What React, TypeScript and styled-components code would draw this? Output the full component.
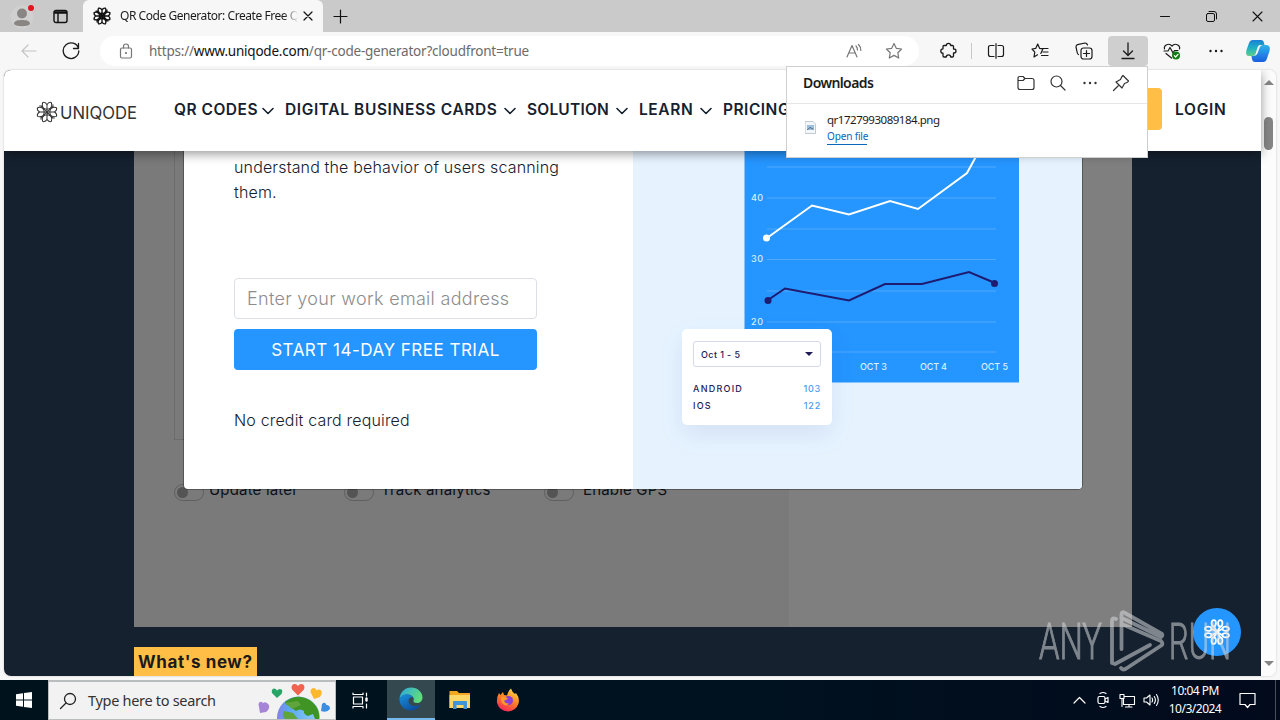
import * as React from 'react';
import styled, { createGlobalStyle } from 'styled-components';

const GlobalStyle = createGlobalStyle`
  * {
    box-sizing: border-box;
  }
  body {
    margin: 0;
    overflow: hidden;
  }
`;

const ui = `'Noto Sans', 'Open Sans', sans-serif`;
const site = `'Inter', 'Liberation Sans', sans-serif`;

const Desktop = styled.div`
  position: relative;
  display: flex;
  flex-direction: column;
  width: 1280px;
  height: 720px;
  overflow: hidden;
  font-family: ${ui};
`;

const Browser = styled.div`
  display: flex;
  flex-direction: column;
  height: 680px;
  background: #f7f7f7;
`;

const Icon = styled.svg<{ $w: number; $h?: number; $stroke?: number }>`
  display: block;
  flex: none;
  width: ${(p) => p.$w}px;
  height: ${(p) => p.$h || p.$w}px;
  fill: none;
  stroke: currentColor;
  stroke-width: ${(p) => p.$stroke ?? 1.2};
  stroke-linecap: round;
  stroke-linejoin: round;
`;

/* ---------- tab strip ---------- */

const TabStrip = styled.div`
  display: flex;
  height: 32px;
  background: #cacaca;
  color: #111;
`;

const StripSlot = styled.div<{ $w: number }>`
  display: flex;
  align-items: center;
  justify-content: center;
  width: ${(p) => p.$w}px;
  height: 32px;
`;

const Tab = styled.div`
  display: flex;
  align-items: center;
  width: 240px;
  height: 32px;
  padding: 0 9px 0 10px;
  border-radius: 6px 6px 0 0;
  background: #f7f7f7;
`;

const TabTitle = styled.div`
  flex: 1;
  margin: -1px 4px 0 9px;
  overflow: hidden;
  white-space: nowrap;
  font-size: 12px;
  letter-spacing: -0.45px;
  color: #1b1b1b;
  -webkit-mask-image: linear-gradient(90deg, #000 92%, transparent 100%);
  mask-image: linear-gradient(90deg, #000 92%, transparent 100%);
`;

const WindowControls = styled.div`
  display: flex;
  margin-left: auto;
`;

/* ---------- toolbar ---------- */

const Toolbar = styled.div`
  display: flex;
  align-items: center;
  height: 38px;
  padding-left: 8px;
  color: #1b1b1b;
`;

const ToolSlot = styled.div<{ $w?: number; $muted?: boolean }>`
  display: flex;
  flex: none;
  align-items: center;
  justify-content: center;
  width: ${(p) => p.$w || 44}px;
  height: 38px;
  color: ${(p) => (p.$muted ? '#c4c4c4' : 'inherit')};
`;

const ActiveTool = styled.div`
  display: flex;
  align-items: center;
  justify-content: center;
  width: 40px;
  height: 30px;
  border-radius: 4px;
  background: #cfcfcf;
`;

const AddressBar = styled.div`
  display: flex;
  align-items: center;
  width: 819px;
  height: 30px;
  margin: 0 7px;
  padding: 0 16px 0 19px;
  border-radius: 15px;
  background: #fff;
  color: #777;
`;

const Url = styled.div`
  flex: 1;
  margin-left: 16px;
  font-size: 13.5px;
  letter-spacing: -0.22px;
  color: #6b6b6b;

  span {
    color: #111;
  }
`;

const Separator = styled.div`
  width: 1px;
  height: 16px;
  margin: 0 2px 0 1px;
  background: #c8c8c8;
`;

/* ---------- page ---------- */

const Viewport = styled.div`
  position: relative;
  display: flex;
  width: 1272px;
  height: 606px;
  margin-left: 4px;
  border-radius: 7px;
  overflow: hidden;
  background: #fff;
  box-shadow: 0 0 2px #bbb;
`;

const Page = styled.div`
  position: relative;
  width: 1257px;
  height: 606px;
  background: #15212f;
  font-family: ${site};
`;

const SiteHeader = styled.header`
  position: relative;
  z-index: 3;
  display: flex;
  align-items: center;
  height: 81px;
  padding-left: 32px;
  background: #fff;
  box-shadow: 0 3px 10px rgba(0, 0, 0, 0.4);
  color: #15212f;
`;

const LogoMark = styled.div`
  display: flex;
  align-items: center;
  width: 138px;
  padding-top: 2px;
  color: #333;
`;

const NavItem = styled.div<{ $w: number; $track: number }>`
  display: flex;
  align-items: center;
  flex: none;
  width: ${(p) => p.$w}px;
  height: 24px;
  margin-top: -3px;
  font-size: 15.5px;
  font-weight: 600;
  letter-spacing: ${(p) => p.$track}px;
  white-space: nowrap;

  svg {
    margin: 4px 11px 0 auto;
  }
`;

const DemoButton = styled.div`
  width: 150px;
  height: 42px;
  margin: -3px 13px 0 139px;
  border-radius: 4px;
  background: #ffbf47;
`;

const Scrollbar = styled.div`
  display: flex;
  flex-direction: column;
  align-items: center;
  width: 15px;
  padding: 10px 0 10px;
  background: #fcfcfc;
`;

const Arrow = styled.div<{ $down?: boolean }>`
  border: 5px solid transparent;
  border-top-width: ${(p) => (p.$down ? 5 : 0)}px;
  border-bottom-width: ${(p) => (p.$down ? 0 : 5)}px;
  border-top-color: ${(p) => (p.$down ? '#858585' : 'transparent')};
  border-bottom-color: ${(p) => (p.$down ? 'transparent' : '#858585')};
`;

const Thumb = styled.div`
  width: 9px;
  height: 33px;
  margin: 32px 0 auto;
  border-radius: 5px;
  background: #858585;
`;

const Generator = styled.section`
  display: flex;
  width: 998px;
  height: 476px;
  margin-left: 130px;
  background: #7f7f7f;
`;

const GeneratorForm = styled.div`
  width: 655px;
  padding-left: 40px;
  background: #7a7a7a;
`;

const FormBox = styled.div`
  width: 575px;
  height: 289px;
  border: 1px solid #6c6c6c;
  border-top: 0;
`;

const Toggles = styled.div`
  display: flex;
  margin-top: 44px;
`;

const Toggle = styled.div<{ $w: number }>`
  display: flex;
  align-items: center;
  width: ${(p) => p.$w}px;
  height: 17px;
`;

const Switch = styled.div`
  width: 30px;
  height: 17px;
  padding: 2px;
  border: 1px solid #5f5f5f;
  border-radius: 9px;

  &::before {
    content: '';
    display: block;
    width: 11px;
    height: 11px;
    border-radius: 50%;
    background: #545454;
  }
`;

const ToggleLabel = styled.div<{ $gap: number }>`
  margin: -6px 0 0 ${(p) => p.$gap}px;
  font-size: 15px;
  letter-spacing: 0.18px;
  color: #0b1118;
  white-space: nowrap;
`;

const WhatsNew = styled.div`
  width: 123px;
  height: 29px;
  margin: 20px 0 0 130px;
  padding-left: 4px;
  background: #ffbf47;
  font-size: 17px;
  font-weight: 700;
  line-height: 30px;
  letter-spacing: 0.6px;
  color: #1b1b1b;
  white-space: nowrap;
`;

/* ---------- trial modal ---------- */

const Modal = styled.div`
  position: absolute;
  z-index: 2;
  top: 81px;
  left: 180px;
  display: flex;
  width: 898px;
  height: 338px;
  border-radius: 0 0 4px 4px;
  overflow: hidden;
  background: #fff;
  box-shadow: 0 0 0 1px rgba(0, 0, 0, 0.3);
`;

const TrialPane = styled.div`
  width: 449px;
  padding: 4px 0 0 50px;
  color: #15212f;
`;

const TrialText = styled.p`
  width: 350px;
  height: 50px;
  margin: 0 0 73px;
  font-size: 16px;
  font-weight: 300;
  line-height: 25px;
  letter-spacing: 0.15px;
`;

const EmailField = styled.div`
  width: 303px;
  height: 41px;
  padding-left: 12px;
  border: 1px solid #dcdfe3;
  border-radius: 4px;
  font-size: 18px;
  font-weight: 300;
  line-height: 40px;
  letter-spacing: 0.31px;
  color: #8d8d8d;
`;

const TrialButton = styled.div`
  width: 303px;
  height: 41px;
  margin-top: 10px;
  border-radius: 4px;
  background: #2595ff;
  font-size: 17px;
  line-height: 43px;
  letter-spacing: 0.5px;
  text-align: center;
  color: #fff;
`;

const Note = styled.div`
  margin-top: 38px;
  font-size: 16px;
  font-weight: 300;
  line-height: 24px;
  letter-spacing: 0.17px;
`;

const ChartPane = styled.div`
  position: relative;
  width: 449px;
  background: #e6f3ff;
`;

const ChartSvg = styled.svg`
  display: block;
  font-family: ${site};
`;

const StatsCard = styled.div`
  position: absolute;
  top: 178px;
  left: 49px;
  width: 150px;
  height: 96px;
  padding: 12px 11px 0;
  border-radius: 5px;
  background: #fff;
  box-shadow: 0 10px 24px rgba(60, 80, 160, 0.1);
  color: #1e1b58;
`;

const RangeSelect = styled.div`
  display: flex;
  align-items: center;
  justify-content: space-between;
  width: 128px;
  height: 26px;
  margin-bottom: 13px;
  padding: 0 7px;
  border: 1px solid #d5d8ea;
  border-radius: 3px;
  font-size: 9px;
  font-weight: 500;
  letter-spacing: 0.4px;
`;

const Caret = styled.div`
  border: 4px solid transparent;
  border-top-color: #1e1b58;
  border-bottom: 0;
`;

const StatRow = styled.div`
  display: flex;
  justify-content: space-between;
  width: 128px;
  height: 17px;
  font-size: 9px;
  font-weight: 500;
  line-height: 17px;
  letter-spacing: 1.25px;

  span:last-child {
    color: #4a9af0;
    letter-spacing: 0.8px;
  }
`;

const ChatBubble = styled.div`
  position: absolute;
  z-index: 2;
  top: 538px;
  left: 1189px;
  display: flex;
  align-items: center;
  justify-content: center;
  width: 48px;
  height: 48px;
  border-radius: 50%;
  background: #2595ff;
  color: #fff;
`;

/* ---------- downloads flyout ---------- */

const Flyout = styled.div`
  position: absolute;
  z-index: 5;
  top: 66px;
  left: 786px;
  width: 362px;
  height: 92px;
  border: 1px solid #cfcfcf;
  background: #fff;
  color: #1b1b1b;
`;

const FlyoutHead = styled.div`
  display: flex;
  align-items: center;
  height: 37px;
  padding: 0 17px 4px 16px;
  border-bottom: 1px solid #e6e6e6;
  color: #333;

  svg + svg {
    margin-left: 14.5px;
  }
`;

const FlyoutTitle = styled.div`
  margin: -1px auto 0 0;
  font-size: 14px;
  font-weight: 600;
  letter-spacing: -0.6px;
  color: #1b1b1b;
`;

const Download = styled.div`
  display: flex;
  padding: 7px 0 0 18px;

  > svg {
    margin-top: 10px;
  }
`;

const FileInfo = styled.div`
  margin-left: 11px;
  font-size: 11.5px;
  line-height: 17px;
  letter-spacing: -0.48px;
`;

const OpenFile = styled.div`
  width: 40px;
  margin-top: 1px;
  border-bottom: 1px solid #0a66b8;
  font-size: 10px;
  line-height: 15px;
  letter-spacing: -0.15px;
  color: #0a66b8;
  white-space: nowrap;
`;

const Watermark = styled.svg`
  position: absolute;
  z-index: 6;
  top: 606px;
  left: 1034px;
  opacity: 0.55;
  font-family: 'Roboto', sans-serif;
`;

/* ---------- taskbar ---------- */

const Taskbar = styled.div`
  display: flex;
  height: 40px;
  background: linear-gradient(90deg, #00131c 0%, #001220 55%, #020a1c 100%);
  color: #fff;
`;

const TaskSlot = styled.div<{ $w: number; $active?: boolean }>`
  display: flex;
  flex: none;
  align-items: center;
  justify-content: center;
  width: ${(p) => p.$w}px;
  height: 40px;
  border-bottom: ${(p) => (p.$active ? '2px solid #76b9ed' : '0')};
  background: ${(p) => (p.$active ? '#33484f' : 'transparent')};
`;

const SearchBox = styled.div`
  display: flex;
  align-items: center;
  width: 288px;
  height: 40px;
  padding: 0 5px 0 10px;
  border: 1px solid #b9bdbd;
  border-width: 2px 1px 1px;
  background: #f2f2f2;
  color: #222;
`;

const SearchText = styled.div`
  margin: -2px auto 0 11px;
  font-size: 14.5px;
  letter-spacing: -0.3px;
  color: #333;
`;

const Tray = styled.div`
  display: flex;
  align-items: center;
  margin-left: auto;
`;

const Clock = styled.div`
  width: 60px;
  font-size: 12px;
  line-height: 18px;
  letter-spacing: -0.5px;
  text-align: center;
  white-space: nowrap;
`;

const ShowDesktop = styled.div`
  width: 5px;
  height: 40px;
  border-left: 1px solid #49505c;
`;

const quarters = [0, 90, 180, 270];

const Knot = ({ size, stroke, round }: { size: number; stroke: number; round?: boolean }) => (
  <Icon $w={size} $stroke={stroke} viewBox='0 0 24 24'>
    {quarters.map((angle) => (
      <g key={angle} transform={`rotate(${angle} 12 12)`}>
        {round ? (
          <>
            <ellipse cx='9' cy='4' rx='2' ry='3' />
            <ellipse cx='15' cy='4' rx='2' ry='3' />
            <path d='M12 12L9 7M12 12L15 7' />
          </>
        ) : (
          <path d='M12 12V4M12 9Q7.500 8.500 7 5.500L4 5.500M7 5.500Q6.500 3 7.500 1.500Q10.500 1 12 4Q13.500 1 16.500 1.500Q17.500 3 17 5.500Q16.500 8.500 12 9M12 12L6 6' />
        )}
      </g>
    ))}
  </Icon>
);

const Chevron = () => (
  <Icon $w={12} $h={8} $stroke={1.6} viewBox='0 0 12 8'>
    <path d='M1 1.500L6 6.500L11 1.500' />
  </Icon>
);

const Star = ({ lines }: { lines?: boolean }) =>
  lines ? (
    <Icon $w={18} viewBox='0 0 18 18'>
      <path d='M9.800 11.500L12 6.800L8.700 6.400L6.700 2L4.700 6.400L1 7L3.800 10.200L3 15L6.500 12.800M11.500 6.500H17M12 10H17M10.500 13.500H17' />
    </Icon>
  ) : (
    <Icon $w={18} viewBox='0 0 18 18'>
      <path d='M9 1.500L11.300 6.300L16.600 7L12.800 10.700L13.700 16L9 13.400L4.300 16L5.200 10.700L1.400 7L6.700 6.300Z' />
    </Icon>
  );

const Dots = () => (
  <Icon $w={16} $stroke={0} viewBox='0 0 16 16'>
    <g fill='currentColor'>
      <circle cx='2.500' cy='8' r='1.200' />
      <circle cx='8' cy='8' r='1.200' />
      <circle cx='13.500' cy='8' r='1.200' />
    </g>
  </Icon>
);

const TopStrip = () => (
  <TabStrip>
    <StripSlot $w={44}>
      <Icon $w={24} $h={28} $stroke={0} viewBox='0 0 24 28'>
        <circle cx='12' cy='15' r='11.500' fill='#d0d0d0' />
        <circle cx='12' cy='11.500' r='5' fill='#898583' />
        <path d='M4 22C4 18.500 8 18 12 18S20 18.500 20 22C18 25 6 25 4 22Z' fill='#898583' />
        <circle cx='21' cy='6' r='3' fill='#e81123' />
      </Icon>
    </StripSlot>
    <StripSlot $w={32}>
      <Icon $w={15} $stroke={1.4} viewBox='0 0 15 15'>
        <rect x='1' y='1.500' width='13' height='12' rx='2' />
        <path d='M1.500 4H13.500M5 4V13M1.500 3H13.500' />
      </Icon>
    </StripSlot>
    <StripSlot $w={7} />
    <Tab>
      <Knot size={18} stroke={1.8} />
      <TabTitle>QR Code Generator: Create Free QR</TabTitle>
      <Icon $w={12} viewBox='0 0 12 12'>
        <path d='M2 2L10 10M10 2L2 10' />
      </Icon>
    </Tab>
    <StripSlot $w={34}>
      <Icon $w={15} viewBox='0 0 15 15'>
        <path d='M7.500 1V14M1 7.500H14' />
      </Icon>
    </StripSlot>
    <WindowControls>
      <StripSlot $w={46}>
        <Icon $w={10} $stroke={1} viewBox='0 0 10 10'>
          <path d='M0.500 5.500H9.500' />
        </Icon>
      </StripSlot>
      <StripSlot $w={46}>
        <Icon $w={11} $stroke={1} viewBox='0 0 11 11'>
          <rect x='0.500' y='2.500' width='8' height='8' rx='1.500' />
          <path d='M3 0.500H8Q10.500 0.500 10.500 3V8' />
        </Icon>
      </StripSlot>
      <StripSlot $w={46}>
        <Icon $w={11} $stroke={1.1} viewBox='0 0 11 11'>
          <path d='M1 1L10 10M10 1L1 10' />
        </Icon>
      </StripSlot>
    </WindowControls>
  </TabStrip>
);

const BrowserToolbar = () => (
  <Toolbar>
    <ToolSlot $w={41} $muted>
      <Icon $w={16} viewBox='0 0 16 16'>
        <path d='M15 8H1M7 2L1 8L7 14' />
      </Icon>
    </ToolSlot>
    <ToolSlot>
      <Icon $w={18} $stroke={1.3} viewBox='0 0 18 18'>
        <path d='M16.500 6.500A7.800 7.800 0 1 0 16.800 9M16.500 1.500V6.500H11.500' />
      </Icon>
    </ToolSlot>
    <AddressBar>
      <Icon $w={14} $h={16} viewBox='0 0 14 16'>
        <rect x='1.500' y='5' width='11' height='10' rx='1.500' />
        <path d='M4.500 5V3.500A2.500 2.500 0 0 1 9.500 3.500V5' />
        <circle cx='7' cy='10' r='0.500' />
      </Icon>
      <Url>
        https://<span>www.uniqode.com</span>/qr-code-generator?cloudfront=true
      </Url>
      <Icon $w={18} viewBox='0 0 18 18' style={{ marginRight: 22 }}>
        <path d='M2 15L7 3.500L12 15M3.800 11H10.300M11 4Q12.500 5.500 12.500 8M13.500 2.500Q16 5 15.800 8.500' />
      </Icon>
      <Star />
    </AddressBar>
    <ToolSlot>
      <Icon $w={18} $stroke={1.3} viewBox='0 0 18 18'>
        <path d='M5 3.500H7.300A2.200 2.200 0 0 1 11.700 3.500H13.500Q14.500 3.500 14.500 4.500V7H15A2 2 0 0 1 15 11H14.500V14Q14.500 15 13.500 15H11.700A2.200 2.200 0 0 0 7.300 15H5Q4 15 4 14V11.200A2.200 2.200 0 0 1 4 6.800V4.500Q4 3.500 5 3.500Z' />
      </Icon>
    </ToolSlot>
    <Separator />
    <ToolSlot>
      <Icon $w={18} $h={16} viewBox='0 0 18 16'>
        <path d='M7 2.500H3.500Q1.500 2.500 1.500 4.500V11.500Q1.500 13.500 3.500 13.500H7M11 2.500H14.500Q16.500 2.500 16.500 4.500V11.500Q16.500 13.500 14.500 13.500H11M9 0.700V15.300' />
      </Icon>
    </ToolSlot>
    <ToolSlot>
      <Star lines />
    </ToolSlot>
    <ToolSlot>
      <Icon $w={18} viewBox='0 0 18 18'>
        <rect x='6' y='6' width='11' height='11' rx='2.500' />
        <path d='M11.500 8.500V14.500M8.500 11.500H14.500M3.500 12.500Q2.500 12 2.300 11L1 5Q1 3 2.600 2.600L10 1Q12 1 12.500 3' />
      </Icon>
    </ToolSlot>
    <ToolSlot>
      <ActiveTool>
        <Icon $w={16} $h={18} $stroke={1.3} viewBox='0 0 16 18'>
          <path d='M8 1V13M3.500 9L8 13.500L12.500 9M2 16.500H14' />
        </Icon>
      </ActiveTool>
    </ToolSlot>
    <ToolSlot>
      <Icon $w={18} viewBox='0 0 18 18'>
        <path d='M1.500 7C0.500 3 6 0.500 9 4C12 0.500 17.500 3 16.500 7M1 9H5L7 5.500L10 11L11.500 8.500H15M3 11.500L8.500 16' />
        <circle cx='13' cy='13.500' r='4' fill='#137c13' stroke='none' />
        <path d='M11.300 13.700L12.600 15L15 12.300' stroke='#fff' />
      </Icon>
    </ToolSlot>
    <ToolSlot>
      <Dots />
    </ToolSlot>
    <ToolSlot $w={40}>
      <Icon $w={26} $stroke={0} viewBox='0 0 26 26'>
        <defs>
          <linearGradient id='copilotA' x1='0' y1='0' x2='0' y2='1'>
            <stop offset='0' stopColor='#1b7fd6' />
            <stop offset='0.500' stopColor='#1fb0c4' />
            <stop offset='1' stopColor='#5fd08a' />
          </linearGradient>
          <linearGradient id='copilotB' x1='0' y1='0' x2='0' y2='1'>
            <stop offset='0' stopColor='#2fb4ea' />
            <stop offset='1' stopColor='#1a5fe0' />
          </linearGradient>
        </defs>
        <path d='M8 2H16Q18.500 2 19 5L19.500 7H15Q13 7 12 11L10.500 16Q10 18 7.500 18H4Q0 18 1.500 12L4 5Q5 2 8 2Z' fill='url(#copilotA)' />
        <path d='M18 24H10Q7.500 24 7 21L6.500 18H8Q12 18 13 14L14.500 10Q15.500 7 18 7H21.500Q26 7.500 24.500 13L22 20.500Q21 24 18 24Z' fill='url(#copilotB)' />
      </Icon>
    </ToolSlot>
  </Toolbar>
);

const gridLines = [167, 198, 229, 259.5, 291, 322, 352];

// coordinates inside are window based, the viewBox shifts them to the pane
const Chart = () => (
  <ChartSvg width='449' height='338' viewBox='633 151 449 338'>
    <rect x='744.500' y='151' width='274.500' height='231.500' fill='#2595ff' />
    {gridLines.map((y) => (
      <path key={y} d={`M767 ${y}H996`} stroke='#50a9ff' strokeWidth='1' />
    ))}
    <g fill='#d8f0ff' fontSize='9' fontWeight='500'>
      <text x='751' y='201' textLength='12'>40</text>
      <text x='751' y='262' textLength='12'>30</text>
      <text x='751' y='325' textLength='12'>20</text>
      <text x='860' y='370' textLength='27'>OCT 3</text>
      <text x='920' y='370' textLength='27'>OCT 4</text>
      <text x='981' y='370' textLength='27'>OCT 5</text>
    </g>
    <g fill='none' strokeWidth='2'>
      <path d='M767 238L812 205.500L849 214.500L890 201L918 209L967 173L979 151' stroke='#fff' />
      <path d='M768 300L785 288.500L849 300.500L885 284H922L969 272L995 283' stroke='#1e1b70' />
    </g>
    <circle cx='766.500' cy='238' r='3.500' fill='#fff' />
    <circle cx='768' cy='300.500' r='3.500' fill='#1e1b70' />
    <circle cx='994.500' cy='283.500' r='3.500' fill='#1e1b70' />
  </ChartSvg>
);

const TrialModal = () => (
  <Modal>
    <TrialPane>
      <TrialText>
        understand the behavior of users scanning
        <br />
        them.
      </TrialText>
      <EmailField>Enter your work email address</EmailField>
      <TrialButton>START 14-DAY FREE TRIAL</TrialButton>
      <Note>No credit card required</Note>
    </TrialPane>
    <ChartPane>
      <Chart />
      <StatsCard>
        <RangeSelect>
          Oct 1 - 5
          <Caret />
        </RangeSelect>
        <StatRow>
          <span>ANDROID</span>
          <span>103</span>
        </StatRow>
        <StatRow>
          <span>IOS</span>
          <span>122</span>
        </StatRow>
      </StatsCard>
    </ChartPane>
  </Modal>
);

const Header = () => (
  <SiteHeader>
    <LogoMark>
      <Knot size={22} stroke={1.1} />
      <Icon $w={82} $h={24} $stroke={0} viewBox='0 0 82 24'>
        <text x='2' y='18.500' textLength='77' lengthAdjust='spacingAndGlyphs' fontSize='17.500' fill='#333'>
          UNIQODE
        </text>
      </Icon>
    </LogoMark>
    <NavItem $w={111} $track={0.5}>
      QR CODES
      <Chevron />
    </NavItem>
    <NavItem $w={242} $track={0.61}>
      DIGITAL BUSINESS CARDS
      <Chevron />
    </NavItem>
    <NavItem $w={112} $track={0.2}>
      SOLUTION
      <Chevron />
    </NavItem>
    <NavItem $w={84} $track={0.6}>
      LEARN
      <Chevron />
    </NavItem>
    <NavItem $w={150} $track={0.5}>
      PRICING
    </NavItem>
    <DemoButton />
    <NavItem $w={60} $track={0.7}>
      LOGIN
    </NavItem>
  </SiteHeader>
);

const Downloads = () => (
  <Flyout>
    <FlyoutHead>
      <FlyoutTitle>Downloads</FlyoutTitle>
      <Icon $w={18} $h={16} viewBox='0 0 18 16'>
        <path d='M1 3.500Q1 1.500 3 1.500H6L8 3.500H15Q17 3.500 17 5.500V12.500Q17 14.500 15 14.500H3Q1 14.500 1 12.500ZM1 5.500H6L8 3.500' />
      </Icon>
      <Icon $w={18} viewBox='0 0 18 18'>
        <circle cx='7.500' cy='7.500' r='5.500' />
        <path d='M11.500 11.500L16 16' />
      </Icon>
      <Dots />
      <Icon $w={18} viewBox='0 0 18 18'>
        <path d='M11 1.500L16.500 7L15 8.500L12.500 9.500L10 14L4 8L8.500 5.500L9.700 3ZM7 11L1.500 16.500' />
      </Icon>
    </FlyoutHead>
    <Download>
      <Icon $w={11} $h={13} $stroke={0.7} viewBox='0 0 11 13'>
        <path d='M0.500 0.500H8L10.500 3V12.500H0.500Z' fill='#f4f7fa' stroke='#aab4be' />
        <rect x='2' y='4' width='7' height='5' fill='#9fc0dc' stroke='none' />
        <path d='M2.500 8.500L5 6.500L8 8' stroke='#2f4a66' />
      </Icon>
      <FileInfo>
        qr1727993089184.png
        <OpenFile>Open file</OpenFile>
      </FileInfo>
    </Download>
  </Flyout>
);

const AnyRun = () => (
  <Watermark width='200' height='70' viewBox='1034 606 200 70'>
    <g fill='#d5d8da' stroke='#d5d8da' strokeWidth='1' fontSize='50' fontWeight='300'>
      <text x='1039' y='659' textLength='63' lengthAdjust='spacingAndGlyphs'>ANY</text>
      <text x='1169' y='659' textLength='62' lengthAdjust='spacingAndGlyphs'>RUN</text>
    </g>
    <g fill='none' stroke='#d5d8da' strokeWidth='3.800' strokeLinecap='round' strokeLinejoin='round'>
      <path d='M1121.500 649V614Q1122 611 1125 613L1162 634Q1163 636 1161 637L1124 619' />
      <path d='M1116 619Q1112 617 1112 621V663L1115 664L1150 645' />
      <path d='M1121 668Q1123 671 1127 668L1162 645Q1163 643 1161 641L1124 625' />
    </g>
  </Watermark>
);

const SystemTaskbar = () => (
  <Taskbar>
    <TaskSlot $w={48}>
      <Icon $w={16} $stroke={0} viewBox='0 0 16 16'>
        <path d='M0 2.300L7 1.300V7.500H0ZM8 1.100L16 0V7.500H8ZM0 8.500H7V14.700L0 13.700ZM8 8.500H16V16L8 14.900Z' fill='#fff' />
      </Icon>
    </TaskSlot>
    <SearchBox>
      <Icon $w={18} $stroke={1.3} viewBox='0 0 18 18'>
        <circle cx='11' cy='7' r='5.500' />
        <path d='M7 11L1.500 16.500' />
      </Icon>
      <SearchText>Type here to search</SearchText>
      <Icon $w={72} $h={37} $stroke={0} viewBox='256 682 72 37'>
        <defs>
          <linearGradient id='sea' x1='0' y1='0' x2='1' y2='0'>
            <stop offset='0' stopColor='#8a7fe8' />
            <stop offset='0.250' stopColor='#5aa5ee' />
            <stop offset='1' stopColor='#8fd0f8' />
          </linearGradient>
        </defs>
        <circle cx='296.500' cy='718' r='21.500' fill='url(#sea)' />
        <path d='M283 702Q291 696 299 697Q308 698 314 706Q318 712 317 719H313L311 714L306 716Q301 714 302 711Q298 708 294 711Q289 708 288 705Q284 706 283 702Z' fill='#3f9424' />
        <path d='M283 703L296 701L299 705L290 709ZM282 711L291 713L296 719H283Q279 714 282 711Z' fill='#5fa53c' />
        <path d='M296 695.500L290 689.500Q288.500 685 292 684Q294.500 683.500 296 686Q297.500 683.500 300 684Q303.500 685 302 689.500Z' fill='#f0634f' />
        <path d='M275 698L270 693Q269 689 272 688.500Q274 688.500 275 690.500Q277 688 279.500 689.500Q281 691 279.500 694Z' fill='#27a567' />
        <path d='M312 699L308.500 692Q308.500 688 312 688Q314 688 314.500 690.500Q317 688.500 319.500 691Q320.500 694 318 697Z' fill='#fbb82c' />
        <path d='M258 713L256.500 704Q258 700 261 703Q264 701 267 705Q268 709 264 712Z' fill='#a583d6' />
        <path d='M319 711L320 704Q323 701 324.500 705Q328 705 328 709Q325 713 319 711Z' fill='#3b8de0' />
      </Icon>
    </SearchBox>
    <TaskSlot $w={49}>
      <Icon $w={17} $stroke={1.2} viewBox='0 0 17 17'>
        <path d='M1 1V2.500H11V1M1 16V14.500H11V16M14.500 1V4M14.500 12V16' />
        <rect x='1.500' y='5' width='9' height='7' />
        <path d='M14.500 6.500V8.500' strokeWidth='2.400' />
      </Icon>
    </TaskSlot>
    <StripSlot $w={2} />
    <TaskSlot $w={48} $active>
      <Icon $w={24} $stroke={0} viewBox='0 0 24 24'>
        <defs>
          <linearGradient id='edgeTop' x1='0' y1='0' x2='1' y2='0.400'>
            <stop offset='0' stopColor='#2aa6e6' />
            <stop offset='1' stopColor='#5fdc7c' />
          </linearGradient>
          <linearGradient id='edgeBody' x1='0' y1='0' x2='0.700' y2='1'>
            <stop offset='0' stopColor='#1b93dd' />
            <stop offset='1' stopColor='#0c4a9c' />
          </linearGradient>
        </defs>
        <path d='M0.500 12C1 5 6 0.500 12 0.500C19 0.500 23.500 5.500 23.500 10.500C23.500 14 21 16 18 16C15 16 14 15 14.500 13.800C16 11.500 13 7.500 8.500 7.500C4.500 7.500 1.500 9.500 0.500 12Z' fill='url(#edgeTop)' />
        <path d='M0.500 12C1.500 9 4.500 7.300 8.200 7.300C11 7.300 13.500 8.700 14.200 10.500C12 9.500 9.500 11 9.500 14C9.500 18 14 20.500 21.500 18C19.500 21.500 16 23.500 12 23.500C5 23.500 0.300 18 0.500 12Z' fill='url(#edgeBody)' />
      </Icon>
    </TaskSlot>
    <TaskSlot $w={49}>
      <Icon $w={22} $h={20} $stroke={0} viewBox='0 0 22 20'>
        <path d='M0.500 1H8L10 3H21V18H0.500Z' fill='#f0a820' />
        <rect x='0.500' y='5' width='20.500' height='13' fill='#ffd766' />
        <path d='M4 19V12Q4 11 5 11H17Q18 11 18 12V19H14.500V15H7.500V19Z' fill='#3f95d8' />
      </Icon>
    </TaskSlot>
    <TaskSlot $w={48}>
      <Icon $w={24} $stroke={0} viewBox='0 0 24 24'>
        <defs>
          <linearGradient id='fox' x1='0.800' y1='0' x2='0.300' y2='1'>
            <stop offset='0' stopColor='#ffe14d' />
            <stop offset='0.450' stopColor='#ff8a1f' />
            <stop offset='1' stopColor='#f5245c' />
          </linearGradient>
        </defs>
        <path d='M3 5L4.500 7L7 4L8 7L11 7.500Q12 3 15 0.500Q16 4 19 6L20 5Q24 10 22.500 15.500Q20 23 12 23.500Q3.500 23 1 15Q0.500 9 3 5Z' fill='url(#fox)' />
        <circle cx='12.500' cy='12.500' r='4.500' fill='#8b3fd8' />
        <path d='M5 9Q9 8 12 10.500Q10 12.500 8 12.500Q9 16 13 15.500Q10 19 7 16Q4 13 5 9Z' fill='#ff9a26' />
      </Icon>
    </TaskSlot>
    <Tray>
      <TaskSlot $w={24}>
        <Icon $w={13} $h={8} viewBox='0 0 13 8'>
          <path d='M1 7L6.500 1.500L12 7' />
        </Icon>
      </TaskSlot>
      <TaskSlot $w={24}>
        <Icon $w={12} $h={18} viewBox='0 0 12 18'>
          <rect x='1' y='5.500' width='7' height='7' rx='1.500' />
          <path d='M8 8L11 6.500V11.500L8 10M3 2.500Q6 0.500 9 2.500M3 15.500Q6 17.500 9 15.500' />
        </Icon>
      </TaskSlot>
      <TaskSlot $w={24}>
        <Icon $w={17} $h={15} $stroke={1.1} viewBox='0 0 17 15'>
          <path d='M5 3.500H15.500V11.500H4.500V6M10 11.500V14M6.500 14H13M1 1.500H5V5.500H1ZM3 5.500V13.500' />
        </Icon>
      </TaskSlot>
      <TaskSlot $w={24}>
        <Icon $w={17} $h={14} $stroke={1.1} viewBox='0 0 17 14'>
          <path d='M1 5H3.500L7 2V12L3.500 9H1ZM9 5Q10.200 7 9 9M11.300 3.500Q13.500 7 11.300 10.500M13.500 1.500Q17 7 13.500 12.500' />
        </Icon>
      </TaskSlot>
      <StripSlot $w={2} />
      <Clock>
        10:04 PM
        <br />
        10/3/2024
      </Clock>
      <TaskSlot $w={45}>
        <Icon $w={17} viewBox='0 0 17 17'>
          <path d='M1 1.500H16V12.500H11L8.500 15.500L6 12.500H1Z' />
        </Icon>
      </TaskSlot>
      <StripSlot $w={5} />
      <ShowDesktop />
    </Tray>
  </Taskbar>
);

const App = () => {
  return (
    <Desktop>
      <GlobalStyle />
      <Browser>
        <TopStrip />
        <BrowserToolbar />
        <Viewport>
          <Page>
            <Header />
            <Generator>
              <GeneratorForm>
                <FormBox />
                <Toggles>
                  <Toggle $w={170}>
                    <Switch />
                    <ToggleLabel $gap={5}>Update later</ToggleLabel>
                  </Toggle>
                  <Toggle $w={200}>
                    <Switch />
                    <ToggleLabel $gap={7}>Track analytics</ToggleLabel>
                  </Toggle>
                  <Toggle $w={160}>
                    <Switch />
                    <ToggleLabel $gap={9}>Enable GPS</ToggleLabel>
                  </Toggle>
                </Toggles>
              </GeneratorForm>
            </Generator>
            <WhatsNew>What's new?</WhatsNew>
            <TrialModal />
            <ChatBubble>
              <Knot size={26} stroke={1.7} round />
            </ChatBubble>
          </Page>
          <Scrollbar>
            <Arrow />
            <Thumb />
            <Arrow $down />
          </Scrollbar>
        </Viewport>
      </Browser>
      <Downloads />
      <AnyRun />
      <SystemTaskbar />
    </Desktop>
  );
};

export default App;
